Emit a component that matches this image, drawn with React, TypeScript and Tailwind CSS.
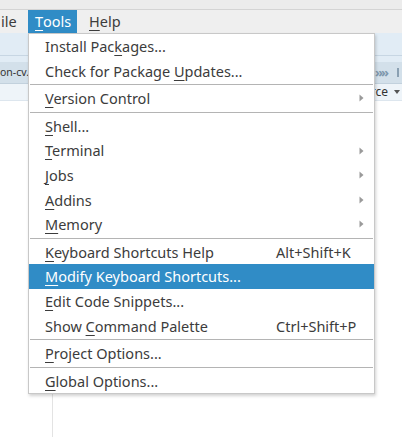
import React from "react";

type Item =
  | { sep: true }
  | { sep?: false; pre: string; key: string; post: string; shortcut?: string; sub?: boolean; active?: boolean };

const items: Item[] = [
  { pre: "Install Pac", key: "k", post: "ages..." },
  { pre: "Check for Package ", key: "U", post: "pdates..." },
  { sep: true },
  { pre: "", key: "V", post: "ersion Control", sub: true },
  { sep: true },
  { pre: "", key: "S", post: "hell..." },
  { pre: "", key: "T", post: "erminal", sub: true },
  { pre: "", key: "J", post: "obs", sub: true },
  { pre: "", key: "A", post: "ddins", sub: true },
  { pre: "", key: "M", post: "emory", sub: true },
  { sep: true },
  { pre: "", key: "K", post: "eyboard Shortcuts Help", shortcut: "Alt+Shift+K" },
  { pre: "", key: "M", post: "odify Keyboard Shortcuts...", active: true },
  { pre: "", key: "E", post: "dit Code Snippets..." },
  { pre: "Show ", key: "C", post: "ommand Palette", shortcut: "Ctrl+Shift+P" },
  { sep: true },
  { pre: "", key: "P", post: "roject Options..." },
  { sep: true },
  { pre: "", key: "G", post: "lobal Options..." },
];

const Mn = ({ children }: { children: React.ReactNode }) => (
  <span className="underline decoration-1 underline-offset-[3px]">{children}</span>
);

const SubArrow = () => (
  <svg width="5" height="8" viewBox="0 0 5 8" className="absolute left-[330px] top-1/2 -translate-y-1/2">
    <path d="M0.5 0.5 L4.5 4 L0.5 7.5 Z" fill="#9a9a9a" />
  </svg>
);

export default function App() {
  return (
    <div className="relative w-[402px] h-[437px] overflow-hidden bg-white font-['Noto_Sans',sans-serif] text-[14.5px] text-[#3c3c3c]">
      {/* window top strip */}
      <div className="h-[10px] bg-[#ececec] border-b border-[#d4d4d4]" />
      {/* menubar */}
      <div className="h-[23px] bg-[#efefef] flex items-center leading-none">
        <div className="w-[28px] pl-[1px]">ile</div>
        <div className="h-full flex items-center px-[7px] w-[49px] bg-[#308cc6] text-white">
          <Mn>T</Mn>ools
        </div>
        <div className="pl-[12px]">
          <Mn>H</Mn>elp
        </div>
      </div>
      {/* toolbar */}
      <div className="h-[23px] bg-[#e1ecf5] border-b border-[#c7d6e3]" />
      <div className="h-[6px] bg-[#e1ecf5]" />
      {/* tab strip */}
      <div className="h-[22px] bg-[#d3e0ea] border-b border-[#c2d1dd] flex items-center justify-between text-[10.5px] text-[#333]">
        <div className="w-[28px] overflow-hidden whitespace-nowrap">on-cv.r</div>
        <div className="flex items-center gap-[4px] pr-[3px]">
          <span className="text-[#b6c6d3] text-[10px]">«</span>
          <span className="text-[#7f98ad] font-bold text-[13px] tracking-[-2px]">»»</span>
          <span className="w-[2px] h-[9px] bg-[#8aa0b2] ml-[6px]" />
        </div>
      </div>
      {/* source toolbar row */}
      <div className="h-[17px] bg-[#eef4f9] border-b border-[#dde6ee] flex items-center justify-end text-[12px] text-[#333] pr-[2px]">
        <span>rce</span>
        <svg width="6" height="4" viewBox="0 0 6 4" className="ml-[6px]">
          <path d="M0 0 L6 0 L3 4 Z" fill="#555" />
        </svg>
      </div>
      {/* editor area */}
      <div className="flex h-full">
        <div className="w-[53px] border-r border-[#e3e3e3] bg-white" />
        <div className="flex-1 bg-white" />
      </div>

      {/* Tools menu */}
      <div className="absolute left-[28px] top-[33px] w-[347px] bg-white border border-[#c8c8c8] shadow-[1px_2px_3px_rgba(0,0,0,0.18)]">
        {items.map((it, i) =>
          it.sep ? (
            <div key={i} className="h-[3px] flex items-center px-[1px]">
              <div className="h-px w-full bg-[#b4b4b4]" />
            </div>
          ) : (
            <div
              key={i}
              className={`relative h-[24.6px] flex items-center pl-[16px] leading-none whitespace-nowrap ${
                it.active ? "bg-[#308cc6] text-white" : ""
              }`}
            >
              <span>
                {it.pre}
                <Mn>{it.key}</Mn>
                {it.post}
              </span>
              {it.shortcut && <span className="absolute left-[247px]">{it.shortcut}</span>}
              {it.sub && <SubArrow />}
            </div>
          )
        )}
      </div>
    </div>
  );
}
